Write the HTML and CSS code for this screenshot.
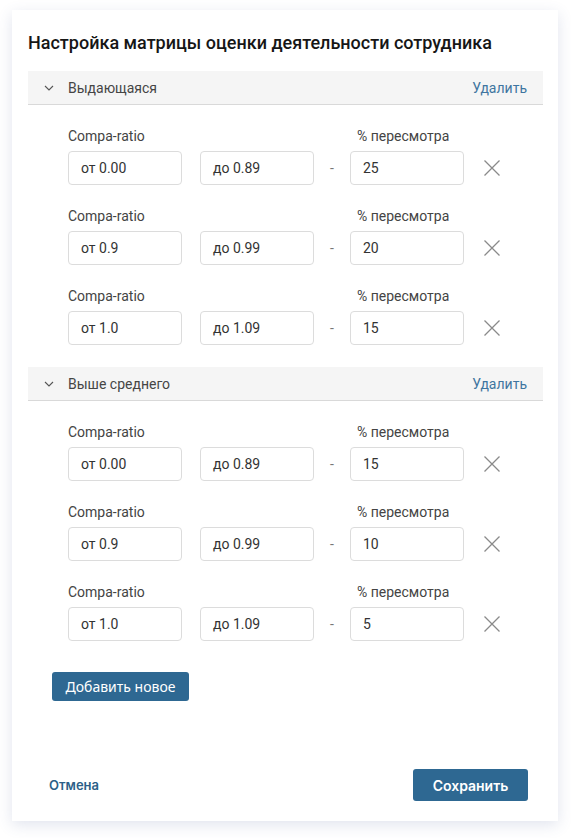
FILE: index.html
```html
<!DOCTYPE html>
<html lang="ru">
<head>
<meta charset="utf-8">
<link rel="stylesheet" href="styles.css">
</head>
<body>
<div class="card">
  <h1 class="title">Настройка матрицы оценки деятельности сотрудника</h1>

  <div class="section">
    <div class="section-head">
      <span class="head-left">
        <svg class="chev" width="10" height="6" viewBox="0 0 10 6"><path d="M1 1 L5 5 L9 1" fill="none" stroke="#555" stroke-width="1.1"/></svg>
        <span class="head-name">Выдающаяся</span>
      </span>
      <span class="link">Удалить</span>
    </div>
    <div class="section-body">
      <div class="row">
        <div class="lbl lbl-a">Compa-ratio</div>
        <div class="lbl lbl-b">% пересмотра</div>
        <div class="inp c1">от 0.00</div>
        <div class="inp c2">до 0.89</div>
        <div class="dash">-</div>
        <div class="inp c3">25</div>
        <svg class="x" width="16" height="16" viewBox="0 0 16 16"><path d="M0.5 0.5 L15.5 15.5 M15.5 0.5 L0.5 15.5" stroke="#8a8a8a" stroke-width="1.3"/></svg>
      </div>
      <div class="row">
        <div class="lbl lbl-a">Compa-ratio</div>
        <div class="lbl lbl-b">% пересмотра</div>
        <div class="inp c1">от 0.9</div>
        <div class="inp c2">до 0.99</div>
        <div class="dash">-</div>
        <div class="inp c3">20</div>
        <svg class="x" width="16" height="16" viewBox="0 0 16 16"><path d="M0.5 0.5 L15.5 15.5 M15.5 0.5 L0.5 15.5" stroke="#8a8a8a" stroke-width="1.3"/></svg>
      </div>
      <div class="row">
        <div class="lbl lbl-a">Compa-ratio</div>
        <div class="lbl lbl-b">% пересмотра</div>
        <div class="inp c1">от 1.0</div>
        <div class="inp c2">до 1.09</div>
        <div class="dash">-</div>
        <div class="inp c3">15</div>
        <svg class="x" width="16" height="16" viewBox="0 0 16 16"><path d="M0.5 0.5 L15.5 15.5 M15.5 0.5 L0.5 15.5" stroke="#8a8a8a" stroke-width="1.3"/></svg>
      </div>
    </div>
  </div>

  <div class="section">
    <div class="section-head">
      <span class="head-left">
        <svg class="chev" width="10" height="6" viewBox="0 0 10 6"><path d="M1 1 L5 5 L9 1" fill="none" stroke="#555" stroke-width="1.1"/></svg>
        <span class="head-name">Выше среднего</span>
      </span>
      <span class="link">Удалить</span>
    </div>
    <div class="section-body">
      <div class="row">
        <div class="lbl lbl-a">Compa-ratio</div>
        <div class="lbl lbl-b">% пересмотра</div>
        <div class="inp c1">от 0.00</div>
        <div class="inp c2">до 0.89</div>
        <div class="dash">-</div>
        <div class="inp c3">15</div>
        <svg class="x" width="16" height="16" viewBox="0 0 16 16"><path d="M0.5 0.5 L15.5 15.5 M15.5 0.5 L0.5 15.5" stroke="#8a8a8a" stroke-width="1.3"/></svg>
      </div>
      <div class="row">
        <div class="lbl lbl-a">Compa-ratio</div>
        <div class="lbl lbl-b">% пересмотра</div>
        <div class="inp c1">от 0.9</div>
        <div class="inp c2">до 0.99</div>
        <div class="dash">-</div>
        <div class="inp c3">10</div>
        <svg class="x" width="16" height="16" viewBox="0 0 16 16"><path d="M0.5 0.5 L15.5 15.5 M15.5 0.5 L0.5 15.5" stroke="#8a8a8a" stroke-width="1.3"/></svg>
      </div>
      <div class="row">
        <div class="lbl lbl-a">Compa-ratio</div>
        <div class="lbl lbl-b">% пересмотра</div>
        <div class="inp c1">от 1.0</div>
        <div class="inp c2">до 1.09</div>
        <div class="dash">-</div>
        <div class="inp c3">5</div>
        <svg class="x" width="16" height="16" viewBox="0 0 16 16"><path d="M0.5 0.5 L15.5 15.5 M15.5 0.5 L0.5 15.5" stroke="#8a8a8a" stroke-width="1.3"/></svg>
      </div>
    </div>
  </div>

  <button class="add">Добавить новое</button>

  <div class="footer">
    <span class="cancel">Отмена</span>
    <button class="save">Сохранить</button>
  </div>
</div>
</body>
</html>
```

FILE: styles.css
```css
html, body {
  margin: 0;
  padding: 0;
  background: #ffffff;
}
body {
  width: 571px;
  height: 838px;
  overflow: hidden;
  font-family: Roboto, "Liberation Sans", sans-serif;
  padding: 10px 0 0 12px;
  box-sizing: border-box;
}
.card {
  width: 546px;
  height: 811px;
  box-sizing: border-box;
  background: #fff;
  box-shadow: 0 4px 14px rgba(70, 90, 150, 0.16);
  padding: 21px 15px 20px 16px;
  display: flex;
  flex-direction: column;
}
.title {
  margin: 0 0 16px 0;
  font-size: 18px;
  line-height: 24px;
  font-weight: 500;
  color: #161616;
}
.section-head {
  height: 34px;
  box-sizing: border-box;
  background: #f5f5f5;
  border-bottom: 1px solid #d9d9d9;
  display: flex;
  align-items: center;
  justify-content: space-between;
  padding: 0 16px 0 16px;
  font-size: 14px;
}
.head-left {
  display: flex;
  align-items: center;
}
.chev {
  margin-right: 14px;
}
.head-name {
  color: #454545;
}
.link {
  color: #3f75a0;
}
.section-body {
  padding: 23px 0 22px 40px;
  display: flex;
  flex-direction: column;
  gap: 23px;
}
.row {
  display: grid;
  grid-template-columns: 114px 18px 114px 36px 114px 20px 16px;
  grid-template-rows: 16px 34px;
  row-gap: 7px;
  font-size: 14px;
}
.lbl {
  line-height: 16px;
  color: #444;
}
.lbl-a {
  grid-column: 1 / 4;
  grid-row: 1;
}
.lbl-b {
  grid-column: 5 / 8;
  grid-row: 1;
  padding-left: 7px;
}
.inp {
  grid-row: 2;
  border: 1px solid #dcdcdc;
  border-radius: 4px;
  box-sizing: border-box;
  height: 34px;
  display: flex;
  align-items: center;
  padding-left: 12px;
  color: #333;
}
.c1 { grid-column: 1; }
.c2 { grid-column: 3; }
.c3 { grid-column: 5; }
.dash {
  grid-column: 4;
  grid-row: 2;
  display: flex;
  align-items: center;
  justify-content: center;
  color: #777;
}
.x {
  grid-column: 7;
  grid-row: 2;
  align-self: center;
}
.add {
  align-self: flex-start;
  margin: 9px 0 0 24px;
  height: 29px;
  width: 137px;
  border: none;
  border-radius: 3px;
  background: #2e6892;
  color: #fff;
  font-family: "Noto Sans", "Open Sans", sans-serif;
  font-size: 14px;
  padding: 0;
}
.footer {
  margin-top: auto;
  display: flex;
  align-items: center;
  justify-content: space-between;
  padding: 0 15px 0 21px;
}
.cancel {
  font-family: Inter, "Liberation Sans", sans-serif;
  font-weight: 600;
  font-size: 13px;
  color: #2c5f88;
}
.save {
  width: 115px;
  height: 32px;
  border: none;
  border-radius: 3px;
  background: #2e6892;
  color: #fff;
  font-family: Inter, "Liberation Sans", sans-serif;
  font-weight: 600;
  font-size: 14px;
  padding: 0;
}
```
